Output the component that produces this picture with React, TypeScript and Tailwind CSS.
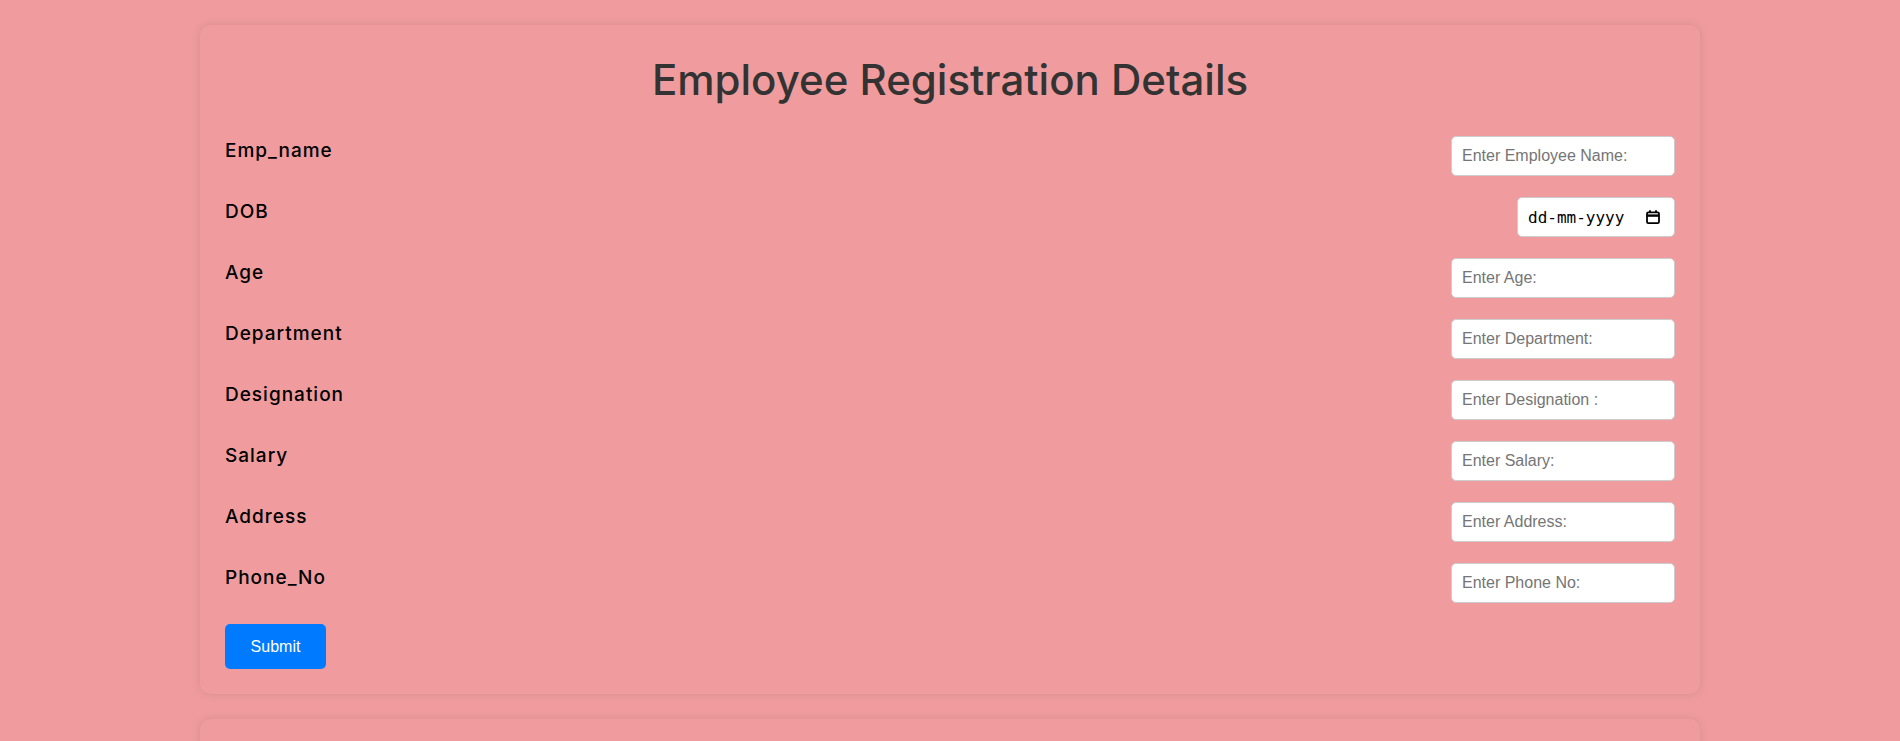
import { useState } from 'react'

const fields = [
  { label: 'Emp_name', name: 'name', type: 'text', placeholder: 'Enter Employee Name:' },
  { label: 'DOB', name: 'dob', type: 'date', placeholder: 'dd-mm-yyyy' },
  { label: 'Age', name: 'age', type: 'text', placeholder: 'Enter Age:' },
  { label: 'Department', name: 'dept', type: 'text', placeholder: 'Enter Department:' },
  { label: 'Designation', name: 'desig', type: 'text', placeholder: 'Enter Designation :' },
  { label: 'Salary', name: 'salary', type: 'text', placeholder: 'Enter Salary:' },
  { label: 'Address', name: 'address', type: 'text', placeholder: 'Enter Address:' },
  { label: 'Phone_No', name: 'phone', type: 'text', placeholder: 'Enter Phone No:' },
]

function CalendarIcon() {
  return (
    <svg width="14" height="14" viewBox="0 0 14 14" fill="none" stroke="#000" strokeWidth="1.8">
      <rect x="1" y="2.4" width="12" height="10.7" rx="1.3" />
      <path d="M1 5.6h12" strokeWidth="2.4" />
      <path d="M4 0.2v2.6M10 0.2v2.6" />
    </svg>
  )
}

export default function App() {
  const [values, setValues] = useState<Record<string, string>>({})

  return (
    <div className="min-h-screen bg-[#f09c9e] py-[25px] font-['Inter',sans-serif]">
      {/* registration card */}
      <div className="mx-auto w-[1500px] rounded-[10px] bg-[#f09c9e] p-[25px] shadow-[0_0_10px_rgba(0,0,0,0.1)]">
        <h1 className="mb-[26px] text-center text-[42px] leading-[60px] font-medium text-[#333]">
          Employee Registration Details
        </h1>
        <form className="flex flex-col" onSubmit={(e) => e.preventDefault()}>
          {fields.map((f) => (
            <div key={f.name} className="mb-[21px] flex items-start justify-between">
              <label className="text-[19px] leading-[30px] font-medium tracking-[1px] text-black">{f.label}</label>
              {f.type === 'date' ? (
                <div className="relative">
                  <input
                    type="text"
                    placeholder={f.placeholder}
                    className="h-[40px] w-[158px] rounded-[5px] border border-[#ccc] bg-white px-[10px] font-['DejaVu_Sans_Mono',monospace] text-[16px] text-black placeholder:text-black"
                    value={values[f.name] ?? ''}
                    onChange={(e) => setValues({ ...values, [f.name]: e.target.value })}
                  />
                  <span className="pointer-events-none absolute top-[13px] right-[15px] flex">
                    <CalendarIcon />
                  </span>
                </div>
              ) : (
                <input
                  type="text"
                  placeholder={f.placeholder}
                  className="h-[40px] w-[224px] rounded-[5px] border border-[#ccc] bg-white px-[10px] font-['Liberation_Sans',Arial,sans-serif] text-[16px] text-black placeholder:text-[#757575]"
                  value={values[f.name] ?? ''}
                  onChange={(e) => setValues({ ...values, [f.name]: e.target.value })}
                />
              )}
            </div>
          ))}
          <div>
            <button
              type="submit"
              className="h-[45px] w-[101px] rounded-[5px] bg-[#007bff] font-['Liberation_Sans',Arial,sans-serif] text-[16px] text-white"
            >
              Submit
            </button>
          </div>
        </form>
      </div>

      {/* records card */}
      <div className="mx-auto mt-[25px] h-[300px] w-[1500px] rounded-[10px] bg-[#f09c9e] p-[25px] shadow-[0_0_10px_rgba(0,0,0,0.1)]" />
    </div>
  )
}
